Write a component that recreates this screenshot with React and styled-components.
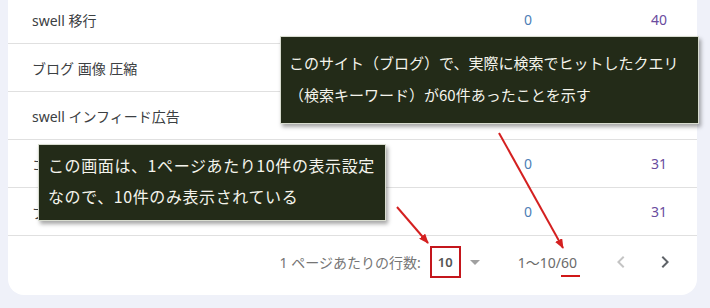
import styled, { createGlobalStyle } from 'styled-components';

const GlobalStyle = createGlobalStyle`
  html, body {
    margin: 0;
    padding: 0;
    background: #eff1f9;
  }
  body {
    font-family: "Noto Sans", "Noto Sans CJK JP", sans-serif;
    overflow: hidden;
  }
`;

const rows = [
  { query: 'swell 移行', clicks: 0, views: 40 },
  { query: 'ブログ 画像 圧縮', clicks: 0, views: 36 },
  { query: 'swell インフィード広告', clicks: 0, views: 33 },
  { query: 'コピペ 禁止 ブログ', clicks: 0, views: 31 },
  { query: 'プラグイン 削除 方法', clicks: 0, views: 31 },
];

const Page = styled.div`
  position: relative;
  display: flow-root;
  width: 710px;
  height: 308px;
`;

const Card = styled.div`
  margin: -4px 13px 0 8px;
  background: #fff;
  border-radius: 0 0 16px 16px;
  padding-bottom: 7px;
`;

const Row = styled.div`
  display: grid;
  grid-template-columns: 1fr 100px 135px;
  align-items: center;
  box-sizing: border-box;
  height: 48px;
  padding: 0 30px 0 24px;
  border-bottom: 1px solid #e0e0e0;
  font-size: 14px;
  color: #3c4043;
`;

const Num = styled.span`
  text-align: right;
  font-size: 14px;
  color: ${(p) => (p.$kind === 'views' ? '#6a4b9e' : '#4d7eb6')};
`;

const Footer = styled.div`
  display: flex;
  align-items: center;
  justify-content: flex-end;
  height: 52px;
  padding-right: 20px;
  font-size: 14px;
  color: #757575;
`;

const Label = styled.span`
  margin-right: 9px;
`;

const PerPage = styled.span`
  box-sizing: border-box;
  display: flex;
  align-items: center;
  justify-content: center;
  width: 31px;
  height: 32px;
  border: 2px solid #c4161c;
  color: #555;
  font-weight: 600;
  font-size: 13px;
`;

const Caret = styled.span`
  width: 0;
  height: 0;
  margin: 0 38px 0 9px;
  border-left: 5px solid transparent;
  border-right: 5px solid transparent;
  border-top: 5px solid #a0a0a0;
`;

const Range = styled.span`
  color: #6b6b6b;
  margin-right: 32px;
`;

const Marked = styled.span`
  position: relative;
  &::after {
    content: '';
    position: absolute;
    left: 0;
    right: -3px;
    bottom: -5px;
    height: 2px;
    background: #d01818;
  }
`;

const NavButton = styled.span`
  display: flex;
  width: 24px;
  height: 24px;
  color: ${(p) => (p.$disabled ? '#c4c4c4' : '#5f6368')};
  & + & {
    margin-left: 20px;
  }
`;

const Callout = styled.div`
  position: absolute;
  left: ${(p) => p.$left}px;
  top: ${(p) => p.$top}px;
  width: ${(p) => p.$width}px;
  box-sizing: border-box;
  padding: ${(p) => p.$pad};
  background: #232b18;
  border: 1px solid #d8dccf;
  box-shadow: 2px 3px 4px rgba(0, 0, 0, 0.35);
  color: #f4f4ec;
  font-family: "Noto Sans CJK JP", sans-serif;
  font-size: ${(p) => p.$size}px;
  line-height: ${(p) => p.$lh}px;
  letter-spacing: ${(p) => p.$spacing || 0}px;
  white-space: nowrap;
`;

const Arrows = styled.svg`
  position: absolute;
  left: 0;
  top: 0;
  pointer-events: none;
`;

const Chevron = ({ dir }) => (
  <svg width="24" height="24" viewBox="0 0 24 24" fill="currentColor">
    {dir === 'left' ? (
      <path d="M15.41 7.41 14 6l-6 6 6 6 1.41-1.41L10.83 12z" />
    ) : (
      <path d="M10 6 8.59 7.41 13.17 12l-4.58 4.59L10 18l6-6z" />
    )}
  </svg>
);

export default function App() {
  return (
    <Page>
      <GlobalStyle />
      <Card>
        {rows.map((r) => (
          <Row key={r.query}>
            <span>{r.query}</span>
            <Num>{r.clicks}</Num>
            <Num $kind="views">{r.views}</Num>
          </Row>
        ))}
        <Footer>
          <Label>1 ページあたりの行数:</Label>
          <PerPage>10</PerPage>
          <Caret />
          <Range>
            1～10/<Marked>60</Marked>
          </Range>
          <NavButton $disabled>
            <Chevron dir="left" />
          </NavButton>
          <NavButton>
            <Chevron dir="right" />
          </NavButton>
        </Footer>
      </Card>

      <Callout $left={280} $top={36} $width={419} $pad="10px 8px 12px 8px" $size={15} $lh={32}>
        このサイト（ブログ）で、実際に検索でヒットしたクエリ
        <br />
        （検索キーワード）が60件あったことを示す
      </Callout>

      <Callout $left={38} $top={144} $width={348} $pad="5px 9px 8px 9px" $size={16} $lh={31} $spacing={0.6}>
        この画面は、1ページあたり10件の表示設定
        <br />
        なので、10件のみ表示されている
      </Callout>

      <Arrows width="710" height="308">
        <defs>
          <marker id="head" markerWidth="10" markerHeight="8" refX="9" refY="4" orient="auto" markerUnits="userSpaceOnUse">
            <path d="M0 0 L10 4 L0 8 z" fill="#d42020" />
          </marker>
        </defs>
        <line x1="499" y1="133" x2="563" y2="248" stroke="#d42020" strokeWidth="2" markerEnd="url(#head)" />
        <line x1="397" y1="207" x2="428" y2="243" stroke="#d42020" strokeWidth="2" markerEnd="url(#head)" />
      </Arrows>
    </Page>
  );
}
